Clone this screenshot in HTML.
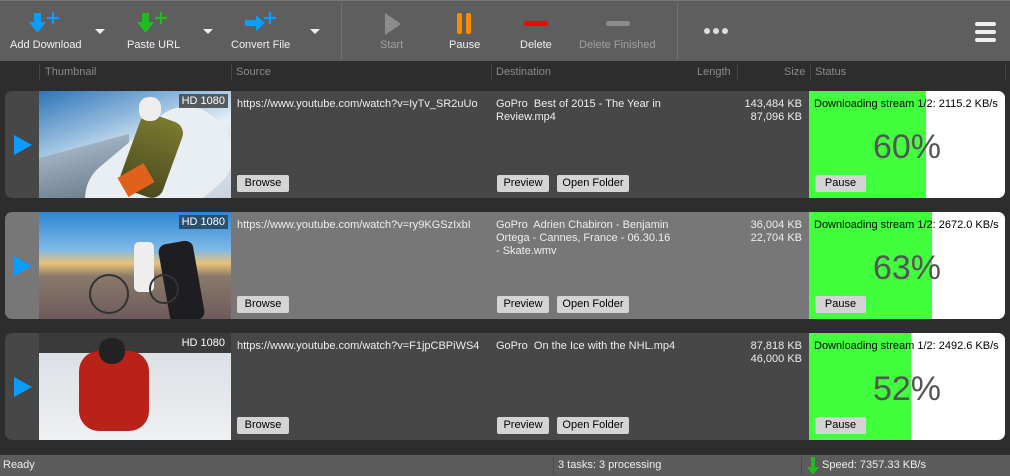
<!DOCTYPE html>
<html><head><meta charset="utf-8"><style>
*{margin:0;padding:0;box-sizing:border-box}
body{width:1010px;height:476px;background:#2d2d2d;font-family:"Liberation Sans",sans-serif;font-size:11px;color:#eee;position:relative;overflow:hidden}
.abs{position:absolute}
#tb{left:0;top:0;width:1010px;height:61px;background:#5e5e5e;border-top:1px solid #777}
.lbl{position:absolute;top:38px;font-size:11px;color:#f0f0f0;white-space:nowrap}
.dd{position:absolute;top:28px;width:0;height:0;border-left:5px solid transparent;border-right:5px solid transparent;border-top:5px solid #eee}
.sep{position:absolute;top:2px;width:1px;height:57px;background:#707070}
#hdr{left:0;top:61px;width:1010px;height:21px;background:#2d2d2d;color:#8a8a8a}
#hdr span{position:absolute;top:5px}
#hdr i{position:absolute;top:3px;width:1px;height:16px;background:#444}
.row{position:absolute;left:5px;width:1000px;height:107px;background:#474747;border-radius:7px;overflow:hidden}
.play{position:absolute;left:9px;top:44px;width:0;height:0;border-top:10px solid transparent;border-bottom:10px solid transparent;border-left:18px solid #0a9cff}
.th{position:absolute;left:34px;top:0;width:192px;height:107px;overflow:hidden}
.hd{position:absolute;right:3px;top:3px;background:rgba(60,60,60,.8);color:#fff;font-size:11px;padding:1px 3px}
.txt{position:absolute;font-size:11px;color:#eee;line-height:13px}
.btn{position:absolute;top:84px;height:17px;background:#d4d4d4;color:#000;font-size:11px;line-height:17px;text-align:center;border-radius:2px}
.st{position:absolute;left:804px;top:0;width:196px;height:107px;background:#fff}
.gr{position:absolute;left:0;top:0;height:107px;background:#41ff3c}
.pct{position:absolute;left:0;width:196px;top:37px;text-align:center;font-size:34px;color:#555}
</style></head><body>
<div id="tb" class="abs">
 <svg class="abs" style="left:28px;top:10px" width="36" height="24"><path d="M6 2h7v9h5l-8.5 11L1 11h5z" fill="#0a9cff"/><path d="M25 1v12M19 7h12" stroke="#0a9cff" stroke-width="2.2"/></svg>
 <div class="lbl" style="left:10px">Add Download</div><div class="dd" style="left:95px"></div>
 <svg class="abs" style="left:136px;top:10px" width="36" height="24"><path d="M6 2h7v9h5l-8.5 11L1 11h5z" fill="#1fbb1f"/><path d="M25 1v12M19 7h12" stroke="#1fbb1f" stroke-width="2.2"/></svg>
 <div class="lbl" style="left:127px">Paste URL</div><div class="dd" style="left:203px"></div>
 <svg class="abs" style="left:244px;top:10px" width="36" height="24"><path d="M1 9h11V4l9 8-9 8v-5H1z" fill="#0a9cff"/><path d="M26 1v12M20 7h12" stroke="#0a9cff" stroke-width="2.2"/></svg>
 <div class="lbl" style="left:231px">Convert File</div><div class="dd" style="left:310px"></div>
 <div class="sep" style="left:341px"></div>
 <svg class="abs" style="left:384px;top:12px" width="20" height="22"><path d="M1 0l16 11L1 22z" fill="#8c8c8c"/></svg>
 <div class="lbl" style="left:380px;color:#a0a0a0">Start</div>
 <div class="abs" style="left:457px;top:12px;width:5px;height:21px;background:#ff8a00;border-radius:2px"></div>
 <div class="abs" style="left:466px;top:12px;width:5px;height:21px;background:#ff8a00;border-radius:2px"></div>
 <div class="lbl" style="left:449px">Pause</div>
 <div class="abs" style="left:524px;top:20px;width:24px;height:5px;background:#f00;border-radius:3px"></div>
 <div class="lbl" style="left:520px">Delete</div>
 <div class="abs" style="left:606px;top:20px;width:24px;height:5px;background:#8c8c8c;border-radius:3px"></div>
 <div class="lbl" style="left:579px;color:#a0a0a0">Delete Finished</div>
 <div class="sep" style="left:677px"></div>
 <div class="abs" style="left:704px;top:27px;width:6px;height:6px;border-radius:3px;background:#ddd"></div>
 <div class="abs" style="left:713px;top:27px;width:6px;height:6px;border-radius:3px;background:#ddd"></div>
 <div class="abs" style="left:722px;top:27px;width:6px;height:6px;border-radius:3px;background:#ddd"></div>
 <div class="abs" style="left:975px;top:21px;width:21px;height:4px;border-radius:2px;background:#eee"></div>
 <div class="abs" style="left:975px;top:29px;width:21px;height:4px;border-radius:2px;background:#eee"></div>
 <div class="abs" style="left:975px;top:37px;width:21px;height:4px;border-radius:2px;background:#eee"></div>
</div>
<div id="hdr" class="abs">
 <i style="left:39px"></i><span style="left:45px">Thumbnail</span>
 <i style="left:231px"></i><span style="left:236px">Source</span>
 <i style="left:491px"></i><span style="left:496px">Destination</span>
 <span style="left:697px">Length</span>
 <i style="left:737px"></i><span style="left:784px">Size</span>
 <i style="left:810px"></i><span style="left:815px">Status</span>
 <i style="left:1005px"></i>
</div>

<div class="row" style="top:91px">
 <div class="play"></div>
 <div class="th" style="background:linear-gradient(160deg,#2f74b8 0%,#8cb6da 30%,#e6eef6 55%,#c9d3de 100%)">
  <div class="abs" style="left:0;top:55px;width:90px;height:52px;background:linear-gradient(#9fb0c0,#6f8090);transform:skewY(-15deg)"></div>
  <div class="abs" style="left:40px;top:40px;width:160px;height:90px;background:#e9eef3;transform:rotate(-40deg);border-radius:40px"></div>
  <div class="abs" style="left:90px;top:25px;width:45px;height:80px;background:linear-gradient(#7a7a30,#4a4a20);transform:rotate(20deg);border-radius:12px"></div>
  <div class="abs" style="left:100px;top:6px;width:22px;height:24px;background:#eee;border-radius:10px"></div>
  <div class="abs" style="left:82px;top:78px;width:30px;height:22px;background:#e0621a;transform:rotate(-30deg)"></div>
  <div class="hd">HD 1080</div></div>
 <div class="txt" style="left:232px;top:7px">https://www.youtube.com/watch?v=IyTv_SR2uUo</div>
 <div class="btn" style="left:232px;width:52px">Browse</div>
 <div class="txt" style="left:491px;top:7px">GoPro&nbsp; Best of 2015 - The Year in<br>Review.mp4</div>
 <div class="txt" style="left:700px;top:7px;width:97px;text-align:right">143,484 KB<br>87,096 KB</div>
 <div class="btn" style="left:492px;width:52px">Preview</div>
 <div class="btn" style="left:552px;width:72px">Open Folder</div>
 <div class="st"><div class="gr" style="width:117px"></div><div class="pct">60%</div>
  <div class="txt" style="left:5px;top:7px;color:#000;white-space:nowrap">Downloading stream 1/2: 2115.2 KB/s</div>
  <div class="btn" style="left:6px;width:51px">Pause</div></div>
</div>

<div class="row" style="top:212px;background:#777">
 <div class="play"></div>
 <div class="th" style="background:linear-gradient(#2e86d4 0%,#7eb8e6 35%,#e8c27a 48%,#8a7a6a 60%,#6e5a5c 100%)">
  <div class="abs" style="left:95px;top:30px;width:20px;height:50px;background:#eee;border-radius:5px"></div>
  <div class="abs" style="left:125px;top:30px;width:35px;height:80px;background:#1e1e22;border-radius:8px;transform:rotate(-10deg)"></div>
  <div class="abs" style="left:50px;top:62px;width:40px;height:40px;border:2px solid #333;border-radius:50%"></div>
  <div class="abs" style="left:110px;top:62px;width:30px;height:30px;border:2px solid #333;border-radius:50%"></div>
  <div class="hd" style="background:#2b4f6e">HD 1080</div></div>
 <div class="txt" style="left:232px;top:7px">https://www.youtube.com/watch?v=ry9KGSzIxbI</div>
 <div class="btn" style="left:232px;width:52px">Browse</div>
 <div class="txt" style="left:491px;top:7px">GoPro&nbsp; Adrien Chabiron - Benjamin<br>Ortega - Cannes, France - 06.30.16<br>- Skate.wmv</div>
 <div class="txt" style="left:700px;top:7px;width:97px;text-align:right">36,004 KB<br>22,704 KB</div>
 <div class="btn" style="left:492px;width:52px">Preview</div>
 <div class="btn" style="left:552px;width:72px">Open Folder</div>
 <div class="st"><div class="gr" style="width:123px"></div><div class="pct">63%</div>
  <div class="txt" style="left:5px;top:7px;color:#000;white-space:nowrap">Downloading stream 1/2: 2672.0 KB/s</div>
  <div class="btn" style="left:6px;width:51px">Pause</div></div>
</div>

<div class="row" style="top:333px">
 <div class="play"></div>
 <div class="th" style="background:linear-gradient(#d8dde2,#eef0f2)">
  <div class="abs" style="left:0;top:0;width:192px;height:20px;background:#3a3a3a"></div>
  <div class="abs" style="left:40px;top:18px;width:70px;height:80px;background:#b82218;border-radius:20px"></div>
  <div class="abs" style="left:60px;top:5px;width:26px;height:26px;background:#222;border-radius:12px"></div>
  <div class="hd">HD 1080</div></div>
 <div class="txt" style="left:232px;top:7px">https://www.youtube.com/watch?v=F1jpCBPiWS4</div>
 <div class="btn" style="left:232px;width:52px">Browse</div>
 <div class="txt" style="left:491px;top:7px">GoPro&nbsp; On the Ice with the NHL.mp4</div>
 <div class="txt" style="left:700px;top:7px;width:97px;text-align:right">87,818 KB<br>46,000 KB</div>
 <div class="btn" style="left:492px;width:52px">Preview</div>
 <div class="btn" style="left:552px;width:72px">Open Folder</div>
 <div class="st"><div class="gr" style="width:102px"></div><div class="pct">52%</div>
  <div class="txt" style="left:5px;top:7px;color:#000;white-space:nowrap">Downloading stream 1/2: 2492.6 KB/s</div>
  <div class="btn" style="left:6px;width:51px">Pause</div></div>
</div>

<div class="abs" style="left:0;top:455px;width:1010px;height:21px;background:#5c5c5c;color:#eee">
 <span class="abs" style="left:3px;top:4px">Ready</span>
 <i class="abs" style="left:553px;top:2px;width:1px;height:17px;background:#4a4a4a"></i>
 <span class="abs" style="left:558px;top:4px">3 tasks: 3 processing</span>
 <i class="abs" style="left:801px;top:2px;width:1px;height:17px;background:#4a4a4a"></i>
 <svg class="abs" style="left:806px;top:2px" width="14" height="18"><path d="M5 0h4v10h4l-6 8-6-8h4z" fill="#1fbb1f"/></svg>
 <span class="abs" style="left:822px;top:4px">Speed: 7357.33 KB/s</span>
</div>
</body></html>
